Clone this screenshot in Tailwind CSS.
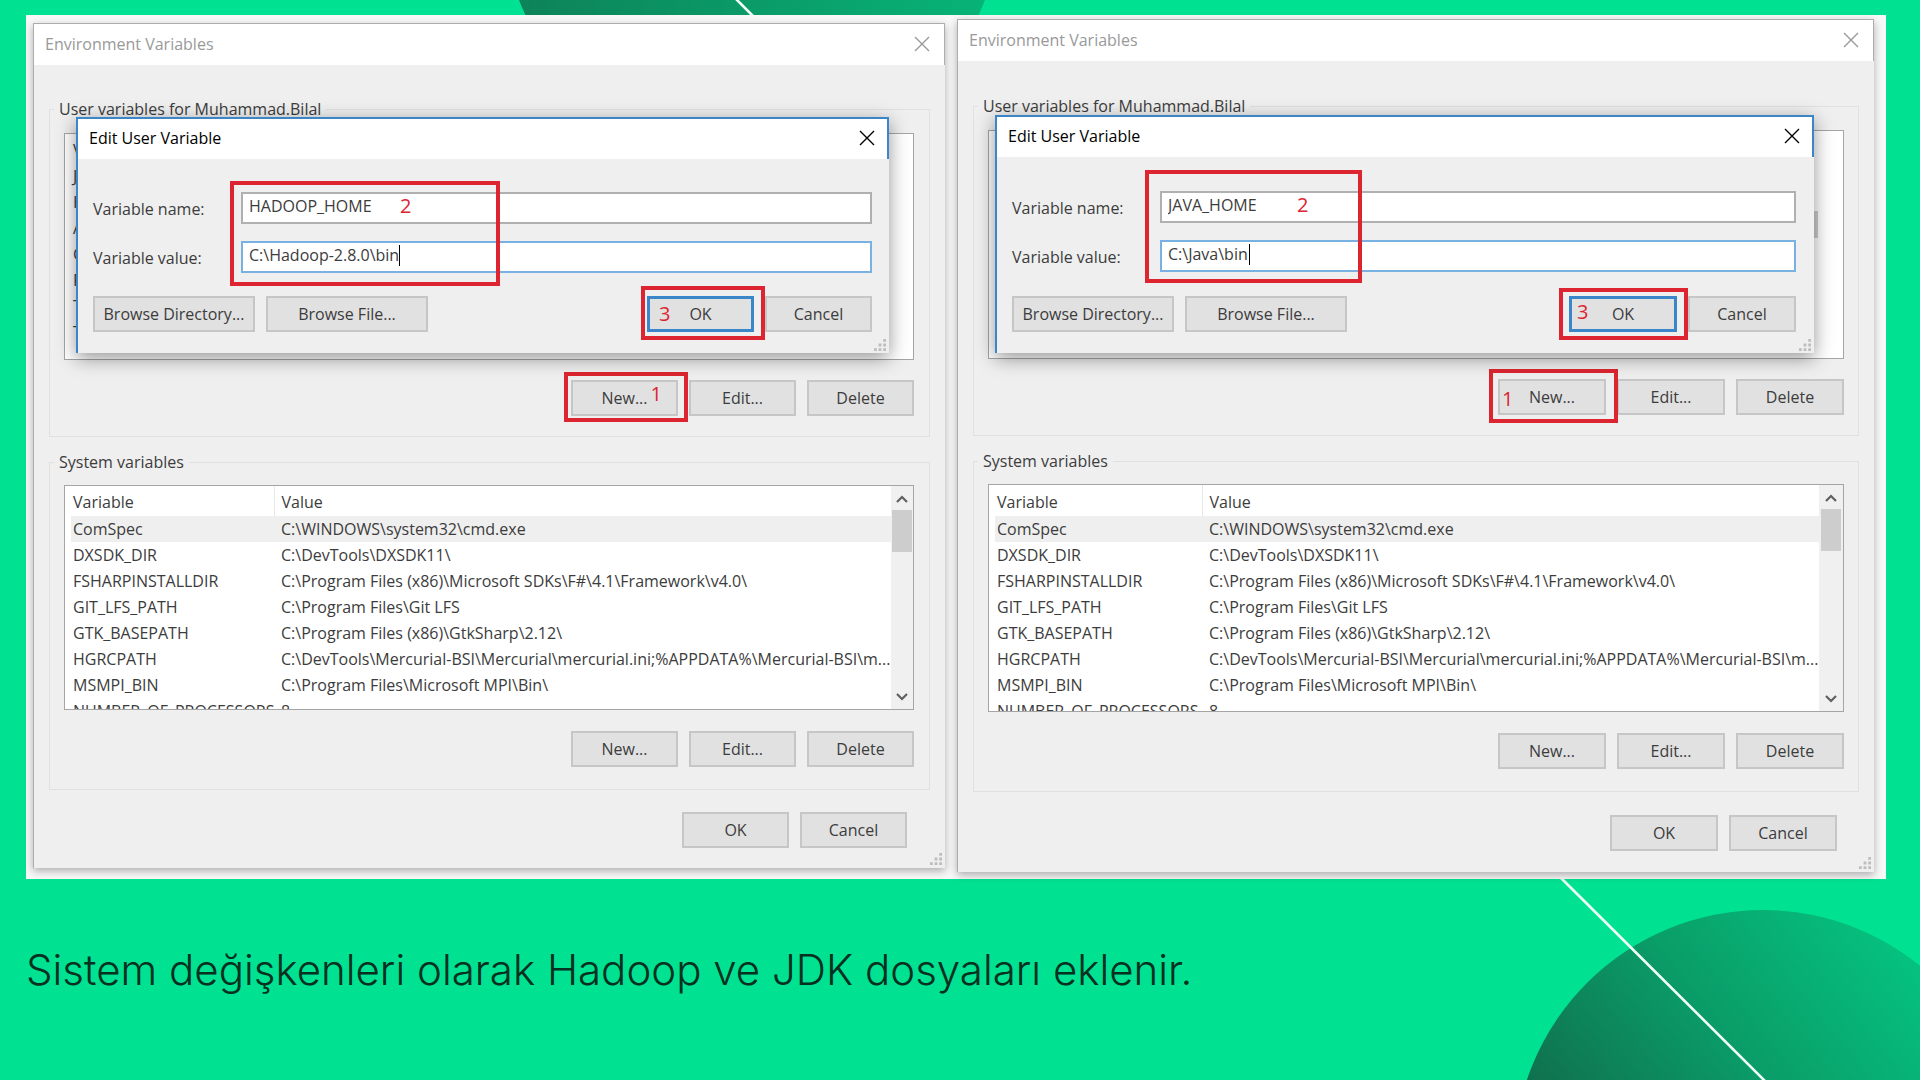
<!DOCTYPE html>
<html lang="tr">
<head>
<meta charset="utf-8">
<meta name="viewport" content="width=device-width, initial-scale=1">
<title>Sistem değişkenleri</title>
<script src="https://cdn.jsdelivr.net/npm/@tailwindcss/browser@4"></script>
</head>
<body class="bg-[#00e291]">
<svg class="hidden">
  <symbol id="close" viewBox="0 0 16 16"><path d="M1 1 15 15M15 1 1 15" fill="none" stroke="currentColor" stroke-width="1.4"/></symbol>
  <symbol id="up" viewBox="0 0 12 8"><path d="M1 7 6 2 11 7" fill="none" stroke="#606060" stroke-width="2.2"/></symbol>
  <symbol id="down" viewBox="0 0 12 8"><path d="M1 1 6 6 11 1" fill="none" stroke="#606060" stroke-width="2.2"/></symbol>
  <symbol id="grip" viewBox="0 0 13 13"><path d="M10 0h3v3h-3zM5 5h3v3H5zM10 5h3v3h-3zM0 10h3v3H0zM5 10h3v3H5zM10 10h3v3h-3z" fill="#bdbdbd"/></symbol>
</svg>

<main class="relative min-h-screen overflow-hidden pt-[15px] pr-[34px] pb-10 pl-[26px] font-['Open_Sans','Noto_Sans',sans-serif] text-base text-[#3c3c3c]">
  <!-- Slide background: two gradient discs and diagonal lines -->
  <svg class="absolute inset-0 h-full w-full" viewBox="0 0 1920 1080" preserveAspectRatio="xMidYMid slice" aria-hidden="true">
    <defs>
      <linearGradient id="disc" x1="0.08" y1="0.5" x2="0.75" y2="-0.05">
        <stop offset="0" stop-color="#11694a"/><stop offset="0.5" stop-color="#0a9d68"/><stop offset="1" stop-color="#04c782"/>
      </linearGradient>
      <linearGradient id="disc2" x1="0" y1="0.8" x2="1" y2="0.6">
        <stop offset="0" stop-color="#0e8057"/><stop offset="1" stop-color="#07b678"/>
      </linearGradient>
    </defs>
    <circle cx="752" cy="-88" r="249" fill="url(#disc2)"/>
    <circle cx="1763" cy="1159" r="249" fill="url(#disc)"/>
    <path d="M734 -3 760 23M1557 874 1767 1083" stroke="#effff8" stroke-width="2.6"/>
  </svg>

  <div class="relative grid grid-cols-[912fr_917fr] items-start gap-3 bg-[#f8f8f8] pt-1 pr-3 pb-[7px] pl-[7px]">

    <!-- HADOOP_HOME window -->
    <section class="relative mt-1 min-w-0 border-l border-[#adadad] bg-[#efefef] shadow-[0_3px_8px_rgba(0,0,0,0.3)]">
      <header class="flex h-[42px] items-center justify-between border-t border-r border-[#adadad] bg-white pr-[14px] pb-[2px] pl-[11px] text-[#999]">
        <h2>Environment Variables</h2>
        <button type="button" aria-label="Close"><svg class="size-4"><use href="#close"/></svg></button>
      </header>

      <fieldset class="mx-[15px] mt-8 min-w-0 border border-[#e0e0e0] pr-[15px] pb-5 pl-[14px]">
        <legend class="-ml-[10px] px-[5px] leading-6">User variables for Muhammad.Bilal</legend>
        <ul class="mt-3 h-[227px] overflow-hidden border border-[#a5a5a5] bg-white pt-[3px] pl-2 leading-[26px]">
          <li>V</li><li>J</li><li>H</li><li>A</li><li>C</li><li>P</li><li>T</li><li>T</li>
        </ul>
        <div class="mt-5 flex justify-end gap-[11px]">
          <div class="relative">
            <button type="button" class="h-9 w-[107px] border-2 border-[#c6c6c6] bg-[#e1e1e1]">New...</button>
            <div class="pointer-events-none absolute -top-2 -right-[10px] -bottom-[6px] -left-[7px] border-4 border-[#dc2530]"></div>
            <span class="pointer-events-none absolute top-0 right-4 text-xl leading-7 text-[#dc2530]">1</span>
          </div>
          <button type="button" class="h-9 w-[107px] border-2 border-[#c6c6c6] bg-[#e1e1e1]">Edit...</button>
          <button type="button" class="h-9 w-[107px] border-2 border-[#c6c6c6] bg-[#e1e1e1]">Delete</button>
        </div>
      </fieldset>

      <fieldset class="mx-[15px] mt-[13px] min-w-0 border border-[#e0e0e0] pr-[15px] pb-[22px] pl-[14px]">
        <legend class="-ml-[10px] px-[5px] leading-6">System variables</legend>
        <div class="mt-[11px] flex h-[225px] items-start overflow-hidden border border-[#a5a5a5] bg-white pl-[6px]">
          <table class="w-full min-w-0 flex-1 table-fixed border-collapse text-left whitespace-nowrap">
            <colgroup><col class="w-[203px]"><col></colgroup>
            <thead><tr class="h-[30px]"><th class="border-r border-[#e8e8e8] p-0 pt-[2px] pl-[2px] leading-6 font-normal">Variable</th><th class="p-0 pt-[2px] pl-[7px] leading-6 font-normal">Value</th></tr></thead>
            <tbody class="leading-[26px]">
              <tr class="bg-[#efefef]"><td class="p-0 pl-[2px]">ComSpec</td><td class="p-0 pl-[7px]">C:\WINDOWS\system32\cmd.exe</td></tr>
              <tr><td class="p-0 pl-[2px]">DXSDK_DIR</td><td class="p-0 pl-[7px]">C:\DevTools\DXSDK11\</td></tr>
              <tr><td class="p-0 pl-[2px]">FSHARPINSTALLDIR</td><td class="p-0 pl-[7px]">C:\Program Files (x86)\Microsoft SDKs\F#\4.1\Framework\v4.0\</td></tr>
              <tr><td class="p-0 pl-[2px]">GIT_LFS_PATH</td><td class="p-0 pl-[7px]">C:\Program Files\Git LFS</td></tr>
              <tr><td class="p-0 pl-[2px]">GTK_BASEPATH</td><td class="p-0 pl-[7px]">C:\Program Files (x86)\GtkSharp\2.12\</td></tr>
              <tr><td class="p-0 pl-[2px]">HGRCPATH</td><td class="p-0 pl-[7px]">C:\DevTools\Mercurial-BSI\Mercurial\mercurial.ini;%APPDATA%\Mercurial-BSI\m...</td></tr>
              <tr><td class="p-0 pl-[2px]">MSMPI_BIN</td><td class="p-0 pl-[7px]">C:\Program Files\Microsoft MPI\Bin\</td></tr>
              <tr><td class="p-0 pl-[2px]">NUMBER_OF_PROCESSORS</td><td class="p-0 pl-[7px]">8</td></tr>
            </tbody>
          </table>
          <div class="flex h-full w-[22px] shrink-0 flex-col items-center bg-[#f0f0f0] pt-[9px] pb-2">
            <svg class="h-2 w-3"><use href="#up"/></svg>
            <div class="mt-[7px] h-[42px] w-5 bg-[#cdcdcd]"></div>
            <svg class="mt-auto h-2 w-3"><use href="#down"/></svg>
          </div>
        </div>
        <div class="mt-[21px] flex justify-end gap-[11px]">
          <button type="button" class="h-9 w-[107px] border-2 border-[#c6c6c6] bg-[#e1e1e1]">New...</button>
          <button type="button" class="h-9 w-[107px] border-2 border-[#c6c6c6] bg-[#e1e1e1]">Edit...</button>
          <button type="button" class="h-9 w-[107px] border-2 border-[#c6c6c6] bg-[#e1e1e1]">Delete</button>
        </div>
      </fieldset>

      <div class="mt-[22px] flex justify-end gap-[11px] pr-[38px] pb-5">
        <button type="button" class="h-9 w-[107px] border-2 border-[#c6c6c6] bg-[#e1e1e1]">OK</button>
        <button type="button" class="h-9 w-[107px] border-2 border-[#c6c6c6] bg-[#e1e1e1]">Cancel</button>
      </div>
      <svg class="absolute right-[3px] bottom-[3px] size-3"><use href="#grip"/></svg>

      <div role="dialog" aria-label="Edit User Variable" class="absolute top-[94px] right-[56px] left-[42px] border-l-2 border-[#3a86c8] bg-[#efefef] shadow-[0_5px_18px_rgba(0,0,0,0.42)]">
        <header class="flex h-[42px] items-center justify-between border-t-2 border-r-2 border-[#3a86c8] bg-white pr-3 pb-[2px] pl-[11px] text-black">
          <h3>Edit User Variable</h3>
          <button type="button" aria-label="Close"><svg class="size-4"><use href="#close"/></svg></button>
        </header>
        <form class="pt-[33px] pr-[17px] pb-[21px] pl-[15px]">
          <div class="relative grid grid-cols-[148px_1fr] items-center gap-y-[17px]">
            <label for="hadoop-name" class="pt-[2px]">Variable name:</label>
            <input id="hadoop-name" type="text" value="HADOOP_HOME" class="h-8 w-full border-2 border-[#b0b0b0] bg-white px-[6px] pb-1">
            <label for="hadoop-value" class="pt-[2px]">Variable value:</label>
            <div class="relative flex">
              <input id="hadoop-value" type="text" value="C:\Hadoop-2.8.0\bin" class="h-8 w-full border-2 border-[#79b2e2] bg-white px-[6px] pb-1">
              <span class="absolute top-1 left-[158px] h-[21px] w-px bg-black"></span>
            </div>
            <div class="pointer-events-none absolute -top-[11px] left-[137px] h-[105px] w-[270px] border-4 border-[#dc2530]"></div>
            <span class="pointer-events-none absolute top-0 left-[307px] text-xl leading-7 text-[#dc2530]">2</span>
          </div>
          <div class="mt-[23px] flex gap-[11px]">
            <button type="button" class="h-9 w-[162px] border-2 border-[#c6c6c6] bg-[#e1e1e1]">Browse Directory...</button>
            <button type="button" class="h-9 w-[162px] border-2 border-[#c6c6c6] bg-[#e1e1e1]">Browse File...</button>
            <div class="relative ml-auto">
              <button type="button" class="h-9 w-[107px] border-3 border-[#3a86c8] bg-[#e1e1e1]">OK</button>
              <div class="pointer-events-none absolute -top-[10px] -right-[11px] -bottom-2 -left-[6px] z-10 border-4 border-[#dc2530]"></div>
              <span class="pointer-events-none absolute top-1 left-3 text-xl leading-7 text-[#dc2530]">3</span>
            </div>
            <button type="button" class="h-9 w-[107px] border-2 border-[#c6c6c6] bg-[#e1e1e1]">Cancel</button>
          </div>
        </form>
        <svg class="absolute right-[3px] bottom-[2px] size-3"><use href="#grip"/></svg>
      </div>
    </section>

    <!-- JAVA_HOME window -->
    <section class="relative min-w-0 border-l border-[#adadad] bg-[#efefef] shadow-[0_3px_8px_rgba(0,0,0,0.3)]">
      <header class="flex h-[42px] items-center justify-between border-t border-r border-[#adadad] bg-white pr-[14px] pb-[2px] pl-[11px] text-[#999]">
        <h2>Environment Variables</h2>
        <button type="button" aria-label="Close"><svg class="size-4"><use href="#close"/></svg></button>
      </header>

      <fieldset class="mx-[15px] mt-[33px] min-w-0 border border-[#e0e0e0] px-[14px] pb-5">
        <legend class="-ml-[10px] px-[5px] leading-6">User variables for Muhammad.Bilal</legend>
        <div class="mt-3 flex h-[229px] items-start justify-end border border-[#a5a5a5] bg-white pt-20 pr-[25px]">
          <div class="h-[27px] w-5 bg-[#cdcdcd]"></div>
        </div>
        <div class="mt-5 flex justify-end gap-[11px]">
          <div class="relative">
            <button type="button" class="h-9 w-[108px] border-2 border-[#c6c6c6] bg-[#e1e1e1]">New...</button>
            <div class="pointer-events-none absolute -top-[10px] -right-3 -bottom-2 -left-[9px] border-4 border-[#dc2530]"></div>
            <span class="pointer-events-none absolute top-[6px] left-1 text-xl leading-7 text-[#dc2530]">1</span>
          </div>
          <button type="button" class="h-9 w-[108px] border-2 border-[#c6c6c6] bg-[#e1e1e1]">Edit...</button>
          <button type="button" class="h-9 w-[108px] border-2 border-[#c6c6c6] bg-[#e1e1e1]">Delete</button>
        </div>
      </fieldset>

      <fieldset class="mx-[15px] mt-[13px] min-w-0 border border-[#e0e0e0] px-[14px] pb-[22px]">
        <legend class="-ml-[10px] px-[5px] leading-6">System variables</legend>
        <div class="mt-[11px] flex h-[228px] items-start overflow-hidden border border-[#a5a5a5] bg-white pl-[6px]">
          <table class="w-full min-w-0 flex-1 table-fixed border-collapse text-left whitespace-nowrap">
            <colgroup><col class="w-[207px]"><col></colgroup>
            <thead><tr class="h-[31px]"><th class="border-r border-[#e8e8e8] p-0 pt-[2px] pl-[2px] leading-6 font-normal">Variable</th><th class="p-0 pt-[2px] pl-[7px] leading-6 font-normal">Value</th></tr></thead>
            <tbody class="leading-[26px]">
              <tr class="bg-[#efefef]"><td class="p-0 pl-[2px]">ComSpec</td><td class="p-0 pl-[7px]">C:\WINDOWS\system32\cmd.exe</td></tr>
              <tr><td class="p-0 pl-[2px]">DXSDK_DIR</td><td class="p-0 pl-[7px]">C:\DevTools\DXSDK11\</td></tr>
              <tr><td class="p-0 pl-[2px]">FSHARPINSTALLDIR</td><td class="p-0 pl-[7px]">C:\Program Files (x86)\Microsoft SDKs\F#\4.1\Framework\v4.0\</td></tr>
              <tr><td class="p-0 pl-[2px]">GIT_LFS_PATH</td><td class="p-0 pl-[7px]">C:\Program Files\Git LFS</td></tr>
              <tr><td class="p-0 pl-[2px]">GTK_BASEPATH</td><td class="p-0 pl-[7px]">C:\Program Files (x86)\GtkSharp\2.12\</td></tr>
              <tr><td class="p-0 pl-[2px]">HGRCPATH</td><td class="p-0 pl-[7px]">C:\DevTools\Mercurial-BSI\Mercurial\mercurial.ini;%APPDATA%\Mercurial-BSI\m...</td></tr>
              <tr><td class="p-0 pl-[2px]">MSMPI_BIN</td><td class="p-0 pl-[7px]">C:\Program Files\Microsoft MPI\Bin\</td></tr>
              <tr><td class="p-0 pl-[2px]">NUMBER_OF_PROCESSORS</td><td class="p-0 pl-[7px]">8</td></tr>
            </tbody>
          </table>
          <div class="flex h-full w-6 shrink-0 flex-col items-center bg-[#f0f0f0] pt-[9px] pb-2">
            <svg class="h-2 w-3"><use href="#up"/></svg>
            <div class="mt-[7px] h-[42px] w-5 bg-[#cdcdcd]"></div>
            <svg class="mt-auto h-2 w-3"><use href="#down"/></svg>
          </div>
        </div>
        <div class="mt-[21px] flex justify-end gap-[11px]">
          <button type="button" class="h-9 w-[108px] border-2 border-[#c6c6c6] bg-[#e1e1e1]">New...</button>
          <button type="button" class="h-9 w-[108px] border-2 border-[#c6c6c6] bg-[#e1e1e1]">Edit...</button>
          <button type="button" class="h-9 w-[108px] border-2 border-[#c6c6c6] bg-[#e1e1e1]">Delete</button>
        </div>
      </fieldset>

      <div class="mt-[23px] flex justify-end gap-[11px] pr-[37px] pb-[21px]">
        <button type="button" class="h-9 w-[108px] border-2 border-[#c6c6c6] bg-[#e1e1e1]">OK</button>
        <button type="button" class="h-9 w-[108px] border-2 border-[#c6c6c6] bg-[#e1e1e1]">Cancel</button>
      </div>
      <svg class="absolute right-[3px] bottom-[3px] size-3"><use href="#grip"/></svg>

      <div role="dialog" aria-label="Edit User Variable" class="absolute top-24 right-[60px] left-[37px] border-l-2 border-[#3a86c8] bg-[#efefef] shadow-[0_5px_18px_rgba(0,0,0,0.42)]">
        <header class="flex h-[42px] items-center justify-between border-t-2 border-r-2 border-[#3a86c8] bg-white pr-3 pb-[2px] pl-[11px] text-black">
          <h3>Edit User Variable</h3>
          <button type="button" aria-label="Close"><svg class="size-4"><use href="#close"/></svg></button>
        </header>
        <form class="pt-[34px] pr-[18px] pb-[21px] pl-[15px]">
          <div class="relative grid grid-cols-[148px_1fr] items-center gap-y-[17px]">
            <label for="java-name" class="pt-[2px]">Variable name:</label>
            <input id="java-name" type="text" value="JAVA_HOME" class="h-8 w-full border-2 border-[#b0b0b0] bg-white px-[6px] pb-1">
            <label for="java-value" class="pt-[2px]">Variable value:</label>
            <div class="relative flex">
              <input id="java-value" type="text" value="C:\Java\bin" class="h-8 w-full border-2 border-[#79b2e2] bg-white px-[6px] pb-1">
              <span class="absolute top-1 left-[89px] h-[21px] w-px bg-black"></span>
            </div>
            <div class="pointer-events-none absolute -top-[21px] left-[133px] h-[113px] w-[217px] border-4 border-[#dc2530]"></div>
            <span class="pointer-events-none absolute top-0 left-[285px] text-xl leading-7 text-[#dc2530]">2</span>
          </div>
          <div class="mt-6 flex gap-[11px]">
            <button type="button" class="h-9 w-[162px] border-2 border-[#c6c6c6] bg-[#e1e1e1]">Browse Directory...</button>
            <button type="button" class="h-9 w-[162px] border-2 border-[#c6c6c6] bg-[#e1e1e1]">Browse File...</button>
            <div class="relative ml-auto">
              <button type="button" class="h-9 w-[108px] border-3 border-[#3a86c8] bg-[#e1e1e1]">OK</button>
              <div class="pointer-events-none absolute -top-2 -right-[11px] -bottom-2 -left-[10px] z-10 border-4 border-[#dc2530]"></div>
              <span class="pointer-events-none absolute top-[2px] left-2 text-xl leading-7 text-[#dc2530]">3</span>
            </div>
            <button type="button" class="h-9 w-[108px] border-2 border-[#c6c6c6] bg-[#e1e1e1]">Cancel</button>
          </div>
        </form>
        <svg class="absolute right-[3px] bottom-[2px] size-3"><use href="#grip"/></svg>
      </div>
    </section>
  </div>

  <p class="relative mt-[61px] font-['Inter',sans-serif] text-[42px] leading-[60px] font-light text-[#06301f]">Sistem değişkenleri olarak Hadoop ve JDK dosyaları eklenir.</p>
</main>
</body>
</html>
